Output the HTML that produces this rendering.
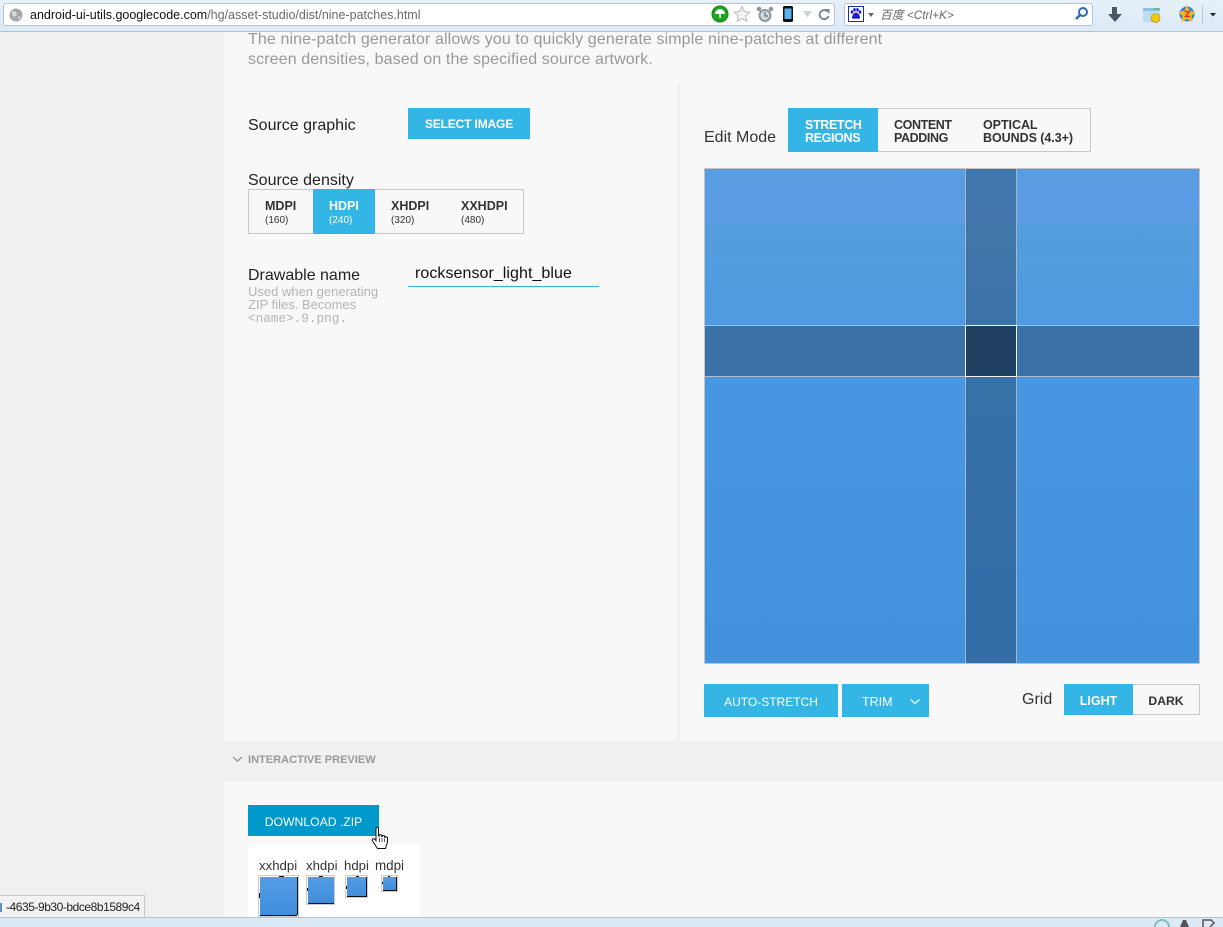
<!DOCTYPE html>
<html><head><meta charset="utf-8">
<style>
html,body{margin:0;padding:0;width:1223px;height:927px;overflow:hidden;background:#f0f0f0;font-family:"Liberation Sans",Arial,sans-serif;color:#222}
.a{position:absolute;white-space:nowrap}
.b{font-weight:bold}
.btn{position:absolute;background:#33b5e5;color:#fff;text-align:center}
.seg{position:absolute;background:#f8f8f8;border:1px solid #c8c8c8;box-sizing:border-box}
.sh{position:absolute;font-size:12.5px;font-weight:bold;line-height:13px;color:#333;white-space:nowrap}
.sm{font-size:10px;font-weight:normal;display:block;line-height:14px;margin-top:1px}
</style></head><body>
<div class="a" style="left:224px;top:32px;width:999px;height:885px;background:#f8f8f8"></div>
<div class="a" style="left:677px;top:84px;width:3px;height:657px;background:#f0f0f0"></div>
<div class="a" style="left:224px;top:741px;width:999px;height:40px;background:#f0f0f0"></div>

<!-- toolbar -->
<div class="a" style="left:0;top:0;width:1223px;height:32px;background:linear-gradient(#e6f0f9,#dce9f6);border-bottom:1px solid #b4c4d6;box-sizing:border-box"></div>
<div class="a" style="left:3px;top:3px;width:832px;height:23px;background:#fff;border:1px solid #b6c6d8;border-radius:3px;box-sizing:border-box"></div>
<svg class="a" style="left:9px;top:8px" width="14" height="14"><circle cx="7" cy="7" r="6.5" fill="#a4a8ac"/><path d="M3 3l4 1 1 3-3 2-2-3zM9 8l3 1-2 3z" fill="#d8dadc"/></svg>
<div class="a" style="left:30px;top:8px;font-size:12.5px;line-height:15px;color:#111">android-ui-utils.googlecode.com<span style="color:#6a6a6a">/hg/asset-studio/dist/nine-patches.html</span></div>

<!-- urlbar icons -->
<svg class="a" style="left:711px;top:5px" width="120" height="20">
<circle cx="9" cy="9" r="8" fill="#1ea51e" stroke="#128012"/><path d="M4 9a5 5 0 0 1 10 0zM8.300 9h1.400v4H8.300z" fill="#fff"/>
<path d="M31 1.500l2.300 5 5.500.6-4.100 3.700 1.100 5.400-4.800-2.800-4.800 2.800 1.100-5.400-4.100-3.700 5.500-.6z" fill="#f4f4f4" stroke="#b8bcc0"/>
<circle cx="54" cy="10.500" r="6.500" fill="#8a98a4"/><circle cx="54" cy="10.500" r="4.500" fill="#d4dade"/><path d="M54 7v4h3" stroke="#69757f" stroke-width="1.300" fill="none"/><circle cx="48" cy="4" r="2.300" fill="#8a98a4"/><circle cx="60" cy="4" r="2.300" fill="#8a98a4"/>
<rect x="72" y="1" width="10" height="16" rx="1.500" fill="#111"/><rect x="73.500" y="3.500" width="7" height="10.500" fill="#58b4ee"/>
<path d="M92 6h9l-4.500 6.500z" fill="#ccd4dc"/>
<path d="M116.500 6.500A4.500 4.500 0 1 0 117.500 11" stroke="#7e8c9a" stroke-width="2" fill="none"/><path d="M113 4h5.500v5z" fill="#7e8c9a"/>
</svg>

<!-- search -->
<div class="a" style="left:844px;top:3px;width:249px;height:23px;background:#fff;border:1px solid #b6c6d8;border-radius:3px;box-sizing:border-box"></div>
<svg class="a" style="left:848px;top:6px" width="30" height="18">
<rect x="0.500" y="0.500" width="15" height="15" fill="#fff" stroke="#1330a8"/><g fill="#2218d0"><ellipse cx="4" cy="6" rx="1.300" ry="1.800"/><ellipse cx="6.500" cy="3.800" rx="1.300" ry="1.800"/><ellipse cx="9.500" cy="3.800" rx="1.300" ry="1.800"/><ellipse cx="12" cy="6" rx="1.300" ry="1.800"/><path d="M8 6.500c2 0 4 3 4 5 0 1.500-2 1.500-4 1-2 .500-4 .500-4-1 0-2 2-5 4-5z"/></g>
<path d="M20 7h6l-3 4z" fill="#666"/></svg>
<div class="a" style="left:880px;top:8px;font-size:11.800px;line-height:15px;font-style:italic;color:#6a6a6a;font-family:'Liberation Sans','Noto Sans CJK SC',sans-serif">百度 &lt;Ctrl+K&gt;</div>
<svg class="a" style="left:1074px;top:6px" width="16" height="16"><circle cx="9" cy="6" r="4" fill="none" stroke="#2a6cb0" stroke-width="2"/><path d="M6 9l-4 4" stroke="#2a6cb0" stroke-width="2.500"/></svg>

<!-- right icons -->
<svg class="a" style="left:1100px;top:2px" width="123" height="28">
<path d="M12 5h5v7h5l-7 8-7-8h4z" fill="#4c5660"/>
<rect x="43" y="6" width="17" height="14" rx="1.500" fill="#bcdcf4"/><path d="M43 6h17v3H43z" fill="#8ec0e4"/><path d="M54 6h2v2h-2zM57 6h2v2h-2z" fill="#68b048"/><circle cx="55.500" cy="16" r="4.500" fill="#f0c818" stroke="#a88a10" stroke-width=".6"/>
<circle cx="87" cy="12" r="7.500" fill="#2c88c8"/><path d="M87 3l2.800 5.700 6.200.9-4.500 4.300 1.100 6.100-5.600-3-5.600 3 1.100-6.100-4.500-4.300 6.200-.9z" fill="#f4b428"/><path d="M84.500 9.500h5l-4 5h4.500" stroke="#d83c20" stroke-width="1.500" fill="none"/>
<path d="M102.500 3v19" stroke="#b8c8d8"/><path d="M110 11h6l-3 3.500z" fill="#222"/>
</svg>

<!-- intro -->
<div class="a" style="left:248px;top:30px;font-size:16px;line-height:20px;color:#999;letter-spacing:.115px">The nine-patch generator allows you to quickly generate simple nine-patches at different<br>screen densities, based on the specified source artwork.</div>

<!-- left form -->
<div class="a" style="left:248px;top:116px;font-size:16px;line-height:19px;color:#222">Source graphic</div>
<div class="btn b" style="left:408px;top:108px;width:122px;height:31px;line-height:33px;font-size:12px;letter-spacing:-.15px">SELECT IMAGE</div>

<div class="a" style="left:248px;top:171px;font-size:16px;line-height:19px;color:#222">Source density</div>
<div class="seg" style="left:248px;top:189px;width:276px;height:45px"></div>
<div class="a" style="left:313px;top:189px;width:62px;height:45px;background:#33b5e5"></div>
<div class="sh" style="left:265px;top:200px">MDPI<span class="sm">(160)</span></div>
<div class="sh" style="left:329px;top:200px;color:#fff">HDPI<span class="sm">(240)</span></div>
<div class="sh" style="left:391px;top:200px">XHDPI<span class="sm">(320)</span></div>
<div class="sh" style="left:461px;top:200px">XXHDPI<span class="sm">(480)</span></div>

<div class="a" style="left:248px;top:266px;font-size:16px;line-height:19px;color:#222">Drawable name</div>
<div class="a" style="left:248px;top:285px;font-size:13px;line-height:13px;color:#b4b4b4">Used when generating<br>ZIP files. Becomes<br><span style="font-family:'Liberation Mono',monospace;font-size:12.700px">&lt;name&gt;.9.png.</span></div>
<div class="a" style="left:415px;top:264px;font-size:16px;line-height:19px;color:#111;letter-spacing:.06px">rocksensor_light_blue</div>
<div class="a" style="left:408px;top:286px;width:191px;height:1px;background:#33b5e5"></div>

<!-- right panel -->
<div class="a" style="left:704px;top:128px;font-size:16px;line-height:19px;color:#333">Edit Mode</div>
<div class="seg" style="left:788px;top:108px;width:303px;height:44px"></div>
<div class="a" style="left:788px;top:108px;width:90px;height:44px;background:#33b5e5"></div>
<div class="sh" style="left:805px;top:119px;color:#fff;letter-spacing:-.35px">STRETCH<br>REGIONS</div>
<div class="sh" style="left:894px;top:119px;letter-spacing:-.4px">CONTENT<br>PADDING</div>
<div class="sh" style="left:983px;top:119px;letter-spacing:-.05px">OPTICAL<br>BOUNDS (4.3+)</div>

<!-- grid -->
<div class="a" style="left:704px;top:168px;width:496px;height:496px;box-sizing:border-box;border:1px solid #c4c4c4;background:linear-gradient(#5a9ce2 0,#5b9ce5 53px,#539dde 54px,#4f9ae0 157px)"></div>
<div class="a" style="left:705px;top:326px;width:494px;height:337px;background:linear-gradient(#4a97e2,#4292de)"></div>
<div class="a" style="left:965px;top:169px;width:52px;height:494px;box-sizing:border-box;border-left:1px solid #a4b6c8;border-right:1px solid #a4b6c8;background:linear-gradient(#3f78ab 0,#4274ac 50px,#3e78a8 60px,#3f74a9 100px,#3b73a8 156px,#3870a8 210px,#336ea8 100%)"></div>
<div class="a" style="left:705px;top:325px;width:494px;height:52px;box-sizing:border-box;border-top:1px solid #a8bed4;border-bottom:1px solid #a8bed4;background:#3a71a6"></div>
<div class="a" style="left:965px;top:325px;width:52px;height:52px;box-sizing:border-box;border:1px solid #f0f4f8;background:#1f3f60"></div>

<!-- bottom buttons -->
<div class="btn" style="left:704px;top:684px;width:134px;height:33px;line-height:36px;font-size:12px">AUTO-STRETCH</div>
<div class="btn" style="left:842px;top:684px;width:87px;height:33px"></div>
<div class="a" style="left:862px;top:684px;line-height:36px;font-size:12.500px;color:#fff">TRIM</div>
<svg class="a" style="left:909px;top:698px" width="12" height="8"><path d="M1.500 1.500L6 5.500l4.500-4" stroke="#e8f6fc" stroke-width="1.500" fill="none"/></svg>
<div class="a" style="left:1022px;top:690px;font-size:16px;line-height:19px;color:#333">Grid</div>
<div class="seg" style="left:1064px;top:684px;width:136px;height:31px"></div>
<div class="a b" style="left:1064px;top:684px;width:69px;height:31px;background:#33b5e5;color:#fff;text-align:center;line-height:34px;font-size:12.500px">LIGHT</div>
<div class="a b" style="left:1133px;top:684px;width:66px;text-align:center;line-height:34px;font-size:12.200px;color:#333">DARK</div>

<!-- interactive preview -->
<svg class="a" style="left:232px;top:756px" width="11" height="7"><path d="M1 1l4.500 4L10 1" stroke="#999" stroke-width="1.500" fill="none"/></svg>
<div class="a b" style="left:248px;top:753px;font-size:11.050px;line-height:15px;color:#999">INTERACTIVE PREVIEW</div>
<div class="btn" style="left:248px;top:805px;width:131px;height:31px;background:#0099cc;line-height:34px;font-size:12.200px">DOWNLOAD .ZIP</div>
<div class="a" style="left:248px;top:844px;width:172px;height:73px;background:#fff;border-radius:3px 3px 0 0"></div>
<div class="a" style="left:259px;top:858px;font-size:13.200px;line-height:15px;color:#333">xxhdpi</div>
<div class="a" style="left:306px;top:858px;font-size:13.200px;line-height:15px;color:#333">xhdpi</div>
<div class="a" style="left:344px;top:858px;font-size:13.200px;line-height:15px;color:#333">hdpi</div>
<div class="a" style="left:375px;top:858px;font-size:13.400px;line-height:15px;color:#333">mdpi</div>

<svg class="a" style="left:258px;top:875px" width="150" height="42">
<defs><linearGradient id="g" x1="0" y1="0" x2="0" y2="1"><stop offset="0" stop-color="#559ce4"/><stop offset="1" stop-color="#3f8edc"/></linearGradient></defs>
<rect x="0.500" y="0.500" width="40" height="41" fill="#fff" stroke="#ccc"/><rect x="2" y="2" width="37" height="38" fill="url(#g)"/><path d="M2 40.500h37M39.500 2v38" stroke="#111"/><path d="M21 1.500h5M1.500 18v5" stroke="#111"/>
<rect x="48.500" y="0.500" width="28" height="29" fill="#fff" stroke="#ccc"/><rect x="50" y="2" width="26" height="26" fill="url(#g)"/><path d="M50 28.500h26" stroke="#111"/><path d="M61 1.500h4M49.500 13v3" stroke="#111"/>
<rect x="87.500" y="0.500" width="22" height="22" fill="#fff" stroke="#ccc"/><rect x="89" y="2" width="19" height="19" fill="url(#g)"/><path d="M89 21.500h20M108.500 2v19" stroke="#111"/><path d="M98 1.500h3M88.500 11v3" stroke="#111"/>
<rect x="123.500" y="0.500" width="16" height="16" fill="#fff" stroke="#ccc"/><rect x="125" y="2" width="13" height="13" fill="url(#g)"/><path d="M125 15.500h14M138.500 2v13" stroke="#111"/><path d="M130 1.500h2M124.500 7v2" stroke="#111"/>
</svg>

<!-- cursor -->
<svg class="a" style="left:370px;top:826px" width="20" height="25"><path d="M6 2.500c0-1.500 2.500-1.500 2.500 0V10h.8V9.500c0-1.200 2.300-1.200 2.400 0v1h.6c0-1.300 2.300-1.300 2.400 0v1h.5c0-1 2.300-1 2.300.5v4l-2 6.500H7.500L2.500 15c-1-1.500.5-3 2-2l1.500 1.500z" fill="#fff" stroke="#111"/><path d="M9.500 12v4M12 12v4M14.500 12.500v3.500" stroke="#111" stroke-width=".7"/></svg>

<!-- status -->
<div class="a" style="left:0;top:917px;width:1223px;height:10px;background:#dce9f6;border-top:1px solid #b8c4d0;box-sizing:border-box"></div>
<div class="a" style="left:0;top:895px;width:145px;height:22px;box-sizing:border-box;background:#f2f2f2;border:1px solid #c8c8c8;border-bottom:none;border-left:none;font-size:12px;letter-spacing:-.45px;line-height:22px;color:#222;overflow:hidden;padding-left:6px">-4635-9b30-bdce8b1589c4</div>
<div class="a" style="left:0;top:903px;width:2px;height:9px;background:#5a8fc0"></div>
<svg class="a" style="left:1150px;top:918px" width="73" height="9"><circle cx="12" cy="9" r="7" fill="none" stroke="#7cc0c0" stroke-width="2"/><path d="M30 9l3-7h3l3 7z" fill="#555"/><path d="M53 9V2h8l3 3-4 4" fill="none" stroke="#555" stroke-width="1.500"/></svg>
</body></html>
